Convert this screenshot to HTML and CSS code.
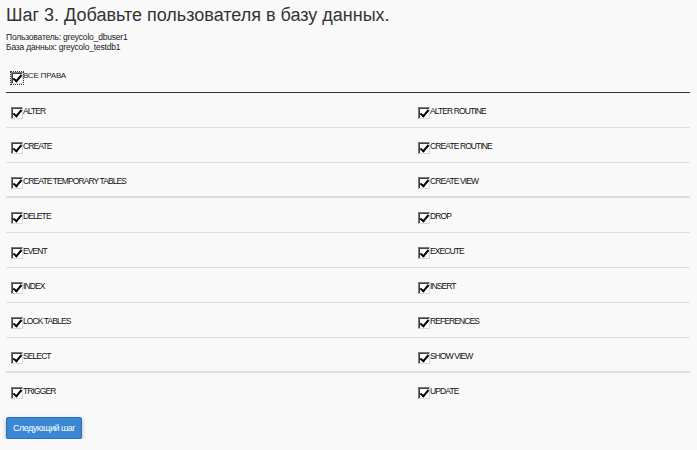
FILE: index.html
```html
<!DOCTYPE html>
<html>
<head>
    <meta charset="utf-8">
    <link rel="stylesheet" href="styles.css">
</head>
<body>
    <h1>Шаг 3. Добавьте пользователя в базу данных.</h1>
    <div class="info">
        <div>Пользователь: greycolo_dbuser1</div>
        <div>База данных: greycolo_testdb1</div>
    </div>

    <label class="all-rights"><span class="cb"></span>ВСЕ ПРАВА</label>

    <div class="privs">
        <div class="row">
            <label class="cell"><span class="cb"></span>ALTER</label>
            <label class="cell"><span class="cb"></span>ALTER ROUTINE</label>
        </div>
        <div class="row">
            <label class="cell"><span class="cb"></span>CREATE</label>
            <label class="cell"><span class="cb"></span>CREATE ROUTINE</label>
        </div>
        <div class="row thick">
            <label class="cell"><span class="cb"></span>CREATE TEMPORARY TABLES</label>
            <label class="cell"><span class="cb"></span>CREATE VIEW</label>
        </div>
        <div class="row">
            <label class="cell"><span class="cb"></span>DELETE</label>
            <label class="cell"><span class="cb"></span>DROP</label>
        </div>
        <div class="row">
            <label class="cell"><span class="cb"></span>EVENT</label>
            <label class="cell"><span class="cb"></span>EXECUTE</label>
        </div>
        <div class="row">
            <label class="cell"><span class="cb"></span>INDEX</label>
            <label class="cell"><span class="cb"></span>INSERT</label>
        </div>
        <div class="row">
            <label class="cell"><span class="cb"></span>LOCK TABLES</label>
            <label class="cell"><span class="cb"></span>REFERENCES</label>
        </div>
        <div class="row thick">
            <label class="cell"><span class="cb"></span>SELECT</label>
            <label class="cell"><span class="cb"></span>SHOW VIEW</label>
        </div>
        <div class="row last">
            <label class="cell"><span class="cb"></span>TRIGGER</label>
            <label class="cell"><span class="cb"></span>UPDATE</label>
        </div>
    </div>

    <button class="btn-next">Следующий шаг</button>
</body>
</html>
```

FILE: styles.css
```css
body {
    margin: 0;
    padding: 0 7px 0 6px;
    background: #f9f9f9;
    color: #222;
    font-family: "Liberation Sans", Arial, sans-serif;
    font-size: 9px;
}

h1 {
    font-size: 18px;
    font-weight: normal;
    color: #333;
    margin: 0;
    padding-top: 4px;
    line-height: 22px;
}

.info {
    margin-top: 6px;
    line-height: 10px;
    color: #1a1a1a;
    font-size: 8.5px;
    letter-spacing: -0.2px;
}

/* checkbox look */
.cb {
    display: inline-block;
    box-sizing: border-box;
    width: 12px;
    height: 12px;
    border: 1px solid;
    border-color: #7a7a7a #d8d8d8 #d8d8d8 #7a7a7a;
    box-shadow: inset 1px 1px 0 #404040;
    background: #fff;
    position: relative;
    vertical-align: top;
    margin-top: 1px;
}

.cb::after {
    content: '';
    position: absolute;
    left: 3px;
    top: 0;
    width: 3px;
    height: 7px;
    border: solid #000;
    border-width: 0 2px 2px 0;
    transform: rotate(40deg);
}

.all-rights {
    display: block;
    margin-top: 19px;
    padding: 0 0 8px 5px;
    border-bottom: 1px solid #333;
    line-height: 10px;
    font-size: 8px;
    letter-spacing: -0.2px;
}

.all-rights .cb {
    outline: 1px dotted #333;
    outline-offset: 0;
}

.row {
    display: grid;
    grid-template-columns: 407px 1fr;
    height: 34px;
    border-bottom: 1px solid #dedede;
}

.row.thick {
    border-bottom-width: 2px;
    height: 33px;
}

.row.last {
    border-bottom: none;
}

.cell {
    padding: 13px 0 0 5px;
    line-height: 10px;
    font-size: 8.5px;
    letter-spacing: -0.9px;
    color: #111;
}

.btn-next {
    margin-top: 10px;
    height: 22px;
    padding: 0 6px;
    background: #3a87d3;
    border: 1px solid #2b6fb5;
    border-radius: 2px;
    color: #fff;
    font-family: "Liberation Sans", Arial, sans-serif;
    font-size: 9px;
    letter-spacing: -0.5px;
    box-shadow: 0 2px 4px rgba(0, 0, 0, 0.3);
}
```
